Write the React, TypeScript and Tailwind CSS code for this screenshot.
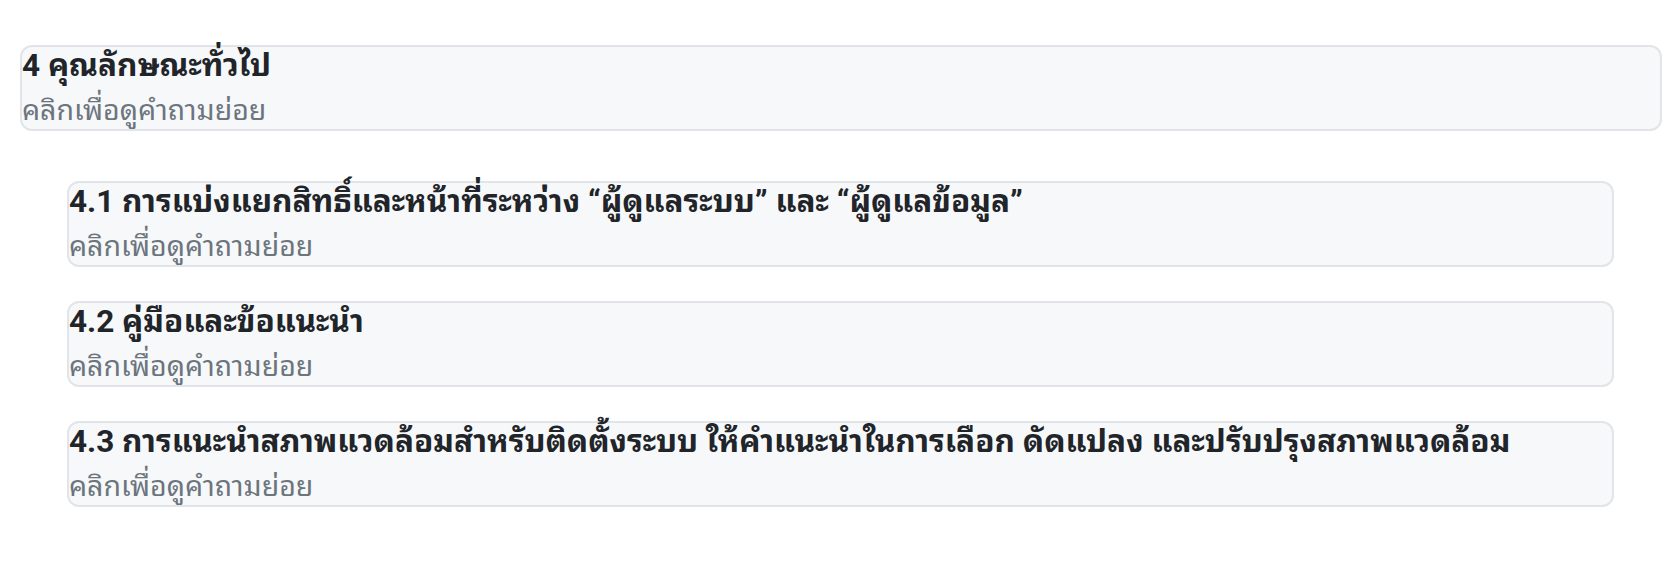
import React from 'react';

interface Section {
  id: string;
  title: string;
}

const subSections: Section[] = [
  { id: '4.1', title: 'การแบ่งแยกสิทธิ์และหน้าที่ระหว่าง “ผู้ดูแลระบบ” และ “ผู้ดูแลข้อมูล”' },
  { id: '4.2', title: 'คู่มือและข้อแนะนำ' },
  { id: '4.3', title: 'การแนะนำสภาพแวดล้อมสำหรับติดตั้งระบบ ให้คำแนะนำในการเลือก ดัดแปลง และปรับปรุงสภาพแวดล้อม' },
];

const SectionCard: React.FC<{ title: string }> = ({ title }) => (
  <div className="cursor-pointer rounded-xl border-2 border-[#e1e4e8] bg-[#f7f8fa]">
    <div className="text-[31.5px] font-bold leading-[38px] text-[#212529] whitespace-nowrap">{title}</div>
    <div className="mt-[8px] text-[28.5px] leading-[36px] text-[#6c757d]">คลิกเพื่อดูคำถามย่อย</div>
  </div>
);

const App: React.FC = () => {
  return (
    <div className="min-h-screen bg-white pt-[45px] pl-[20px] pr-[16px] font-['Roboto','Noto_Sans_Thai_Looped',sans-serif]">
      <SectionCard title="4 คุณลักษณะทั่วไป" />

      {/* Sub sections */}
      <div className="mt-[50px] ml-[47px] mr-[48px] flex flex-col gap-[34px]">
        {subSections.map((s) => (
          <SectionCard key={s.id} title={`${s.id} ${s.title}`} />
        ))}
      </div>
    </div>
  );
};

export default App;
